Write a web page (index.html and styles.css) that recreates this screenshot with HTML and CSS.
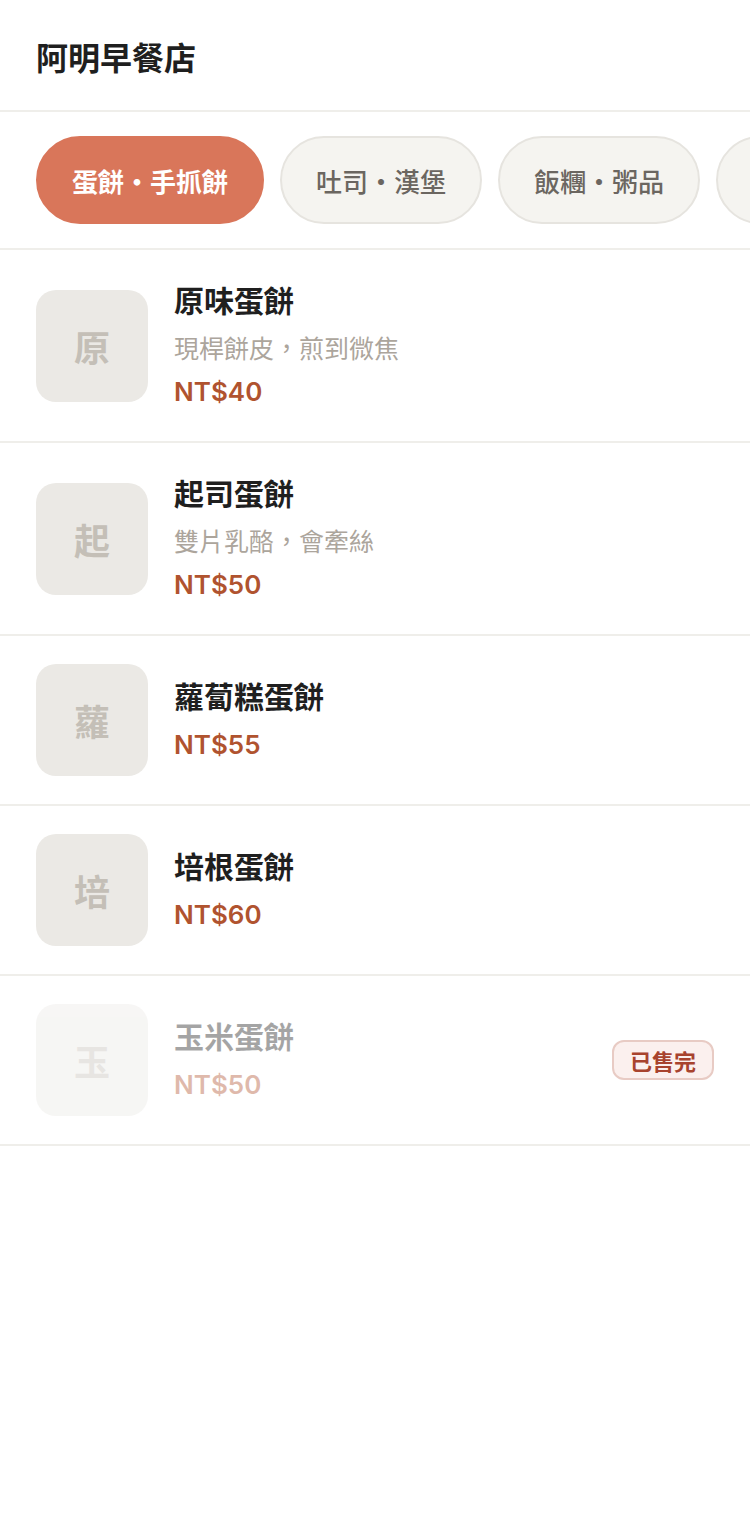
FILE: index.html
```html
<!DOCTYPE html>
<html lang="zh-Hant">
<head>
  <meta charset="UTF-8" />
  <meta name="viewport" content="width=device-width, initial-scale=1.0"/>
  <title>阿明早餐店</title>
  <link rel="stylesheet" href="styles.css">
</head>
<body>
  <header class="top-bar">
    <h1>阿明早餐店</h1>
  </header>

  <nav class="tabs">
    <span class="tab active">蛋餅・手抓餅</span>
    <span class="tab">吐司・漢堡</span>
    <span class="tab">飯糰・粥品</span>
    <span class="tab">飲料・咖啡</span>
  </nav>

  <ul class="menu">
    <li class="item">
      <div class="thumb">原</div>
      <div class="info">
        <div class="name">原味蛋餅</div>
        <div class="desc">現桿餅皮，煎到微焦</div>
        <div class="price">NT$40</div>
      </div>
    </li>
    <li class="item">
      <div class="thumb">起</div>
      <div class="info">
        <div class="name">起司蛋餅</div>
        <div class="desc">雙片乳酪，會牽絲</div>
        <div class="price">NT$50</div>
      </div>
    </li>
    <li class="item">
      <div class="thumb">蘿</div>
      <div class="info">
        <div class="name">蘿蔔糕蛋餅</div>
        <div class="price">NT$55</div>
      </div>
    </li>
    <li class="item">
      <div class="thumb">培</div>
      <div class="info">
        <div class="name">培根蛋餅</div>
        <div class="price">NT$60</div>
      </div>
    </li>
    <li class="item sold-out">
      <div class="thumb">玉</div>
      <div class="info">
        <div class="name">玉米蛋餅</div>
        <div class="price">NT$50</div>
      </div>
      <span class="badge">已售完</span>
    </li>
  </ul>
</body>
</html>
```

FILE: styles.css
```css
body {
  margin: 0;
  background: #ffffff;
  font-family: "Noto Sans CJK TC", "Noto Sans", sans-serif;
  color: #1f1f1f;
}

.top-bar {
  height: 112px;
  display: flex;
  align-items: center;
  padding: 2px 36px 0;
  box-sizing: border-box;
  border-bottom: 2px solid #efeeea;
}

.top-bar h1 {
  margin: 0;
  font-size: 32px;
  font-weight: 700;
  line-height: 1;
}

.tabs {
  display: flex;
  gap: 16px;
  padding: 24px 36px;
  overflow: hidden;
  border-bottom: 2px solid #efeeea;
}

.tab {
  flex-shrink: 0;
  height: 88px;
  box-sizing: border-box;
  padding: 0 34px;
  display: flex;
  align-items: center;
  border-radius: 44px;
  border: 2px solid #e6e4df;
  background: #f5f4f0;
  color: #6b6660;
  font-size: 26px;
  font-weight: 500;
  white-space: nowrap;
}

.tab.active {
  background: #d9765a;
  border-color: #d9765a;
  color: #ffffff;
  font-weight: 700;
}

.menu {
  list-style: none;
  margin: 0;
  padding: 0;
}

.item {
  display: flex;
  align-items: center;
  gap: 26px;
  padding: 28px 36px;
  border-bottom: 2px solid #efeeea;
}

.thumb {
  flex-shrink: 0;
  width: 112px;
  height: 112px;
  border-radius: 20px;
  background: #ebe9e5;
  color: #c4bfb7;
  font-size: 36px;
  font-weight: 700;
  display: flex;
  align-items: center;
  justify-content: center;
}

.info {
  flex: 1;
  display: flex;
  flex-direction: column;
}

.name {
  font-size: 30px;
  font-weight: 700;
  line-height: 42px;
  color: #1f1f1f;
}

.desc {
  margin-top: 10px;
  font-size: 25px;
  line-height: 35px;
  color: #aca59c;
}

.price {
  margin-top: 6px;
  font-family: Inter, "Liberation Sans", sans-serif;
  font-size: 26px;
  font-weight: 600;
  line-height: 42px;
  color: #b0532f;
}

.name + .price {
  margin-top: 8px;
}

.sold-out .thumb,
.sold-out .info {
  opacity: 0.4;
}

.badge {
  flex-shrink: 0;
  height: 40px;
  box-sizing: border-box;
  padding: 0 16px;
  display: flex;
  align-items: center;
  border-radius: 12px;
  border: 2px solid #e8cbc4;
  background: #fbf0ee;
  color: #a8432e;
  font-size: 22px;
  font-weight: 700;
}
```
